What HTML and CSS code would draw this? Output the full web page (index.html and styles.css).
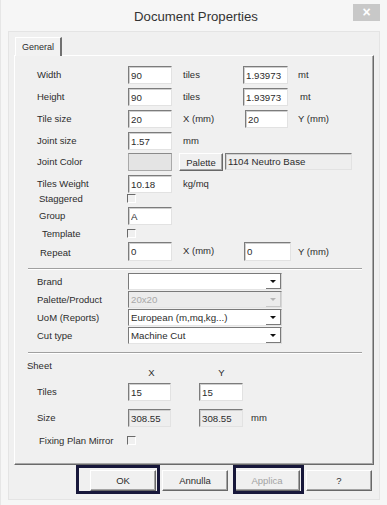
FILE: index.html
```html
<!DOCTYPE html>
<html lang="it">
<head>
  <meta charset="UTF-8">
  <title>Document Properties</title>
  <link rel="stylesheet" href="styles.css">
</head>
<body>
<div class="window">
  <div class="titlebar">
    <span></span>
    <span class="title">Document Properties</span>
    <span class="close">&times;</span>
  </div>

  <div class="client">
    <div class="tabs"><span class="tab">General</span></div>

    <div class="panel">
      <!-- dimensioni -->
      <div class="row h22"><span class="lbl">Width</span><input class="field" value="90"><span class="unit">tiles</span><input class="field f2" value="1.93973"><span class="unit2">mt</span></div>
      <div class="row h22"><span class="lbl">Height</span><input class="field" value="90"><span class="unit">tiles</span><input class="field f2" value="1.93973"><span class="unit2 u12">mt</span></div>
      <div class="row h22"><span class="lbl">Tile size</span><input class="field" value="20"><span class="unit">X (mm)</span><input class="field f2 tile2" value="20"><span class="unit2">Y (mm)</span></div>
      <div class="row h21"><span class="lbl">Joint size</span><input class="field" value="1.57"><span class="unit">mm</span></div>
      <div class="row h22"><span class="lbl">Joint Color</span><span class="swatch"></span><button class="btn palette">Palette</button><input class="field ro name" value="1104 Neutro Base"></div>
      <div class="row h18"><span class="lbl">Tiles Weight</span><input class="field" value="10.18"><span class="unit">kg/mq</span></div>
      <div class="row h14"><span class="lbl small ind2">Staggered</span><span class="check"></span></div>
      <div class="row h21"><span class="lbl ind2">Group</span><input class="field" value="A"></div>
      <div class="row h14"><span class="lbl small ind5">Template</span><span class="check"></span></div>
      <div class="row h19"><span class="lbl ind3 low">Repeat</span><input class="field tall" value="0"><span class="unit">X (mm)</span><input class="field f2 tall rep2" value="0"><span class="unit2 u7">Y (mm)</span></div>

      <div class="sep"></div>

      <!-- prodotto -->
      <div class="row h18"><span class="lbl">Brand</span><div class="combo"><span class="combo-text"></span><span class="arrow"></span></div></div>
      <div class="row h18"><span class="lbl">Palette/Product</span><div class="combo off"><span class="combo-text">20x20</span><span class="arrow"></span></div></div>
      <div class="row h18"><span class="lbl">UoM (Reports)</span><div class="combo"><span class="combo-text">European (m,mq,kg...)</span><span class="arrow"></span></div></div>
      <div class="row h18"><span class="lbl">Cut type</span><div class="combo"><span class="combo-text">Machine Cut</span><span class="arrow"></span></div></div>

      <div class="sep"></div>

      <!-- foglio -->
      <div class="row sheet-head">
        <span class="sheet-title">Sheet</span>
        <span class="axis">X</span>
        <span class="axis axis-y">Y</span>
      </div>
      <div class="row h26"><span class="lbl">Tiles</span><input class="field s1" value="15"><input class="field s2" value="15"></div>
      <div class="row h25"><span class="lbl">Size</span><input class="field s1 ro" value="308.55"><input class="field s2 ro" value="308.55"><span class="unit-mm">mm</span></div>
      <div class="row"><span class="lbl small14 ind2">Fixing Plan Mirror</span><span class="check low2"></span></div>
    </div>

    <div class="buttons">
      <button class="btn dlg marked mark-ok">OK</button>
      <button class="btn dlg">Annulla</button>
      <button class="btn dlg disabled marked mark-apply">Applica</button>
      <button class="btn dlg">?</button>
    </div>
  </div>
</div>
</body>
</html>
```

FILE: styles.css
```css
* { box-sizing: border-box; }
body {
  margin: 0;
  font-family: 'Liberation Sans', Arial, sans-serif;
  font-size: 9.5px;
  color: #2c2c2c;
  background: #f5f5f5;
}
.window {
  width: 387px;
  height: 505px;
  background: #f6f6f6;
  border-left: 1px solid #e6e6e6;
  padding: 0 7px 0 7px;
}
.titlebar {
  display: grid;
  grid-template-columns: 1fr auto 1fr;
  height: 31px;
  padding-left: 4px;
}
.title {
  font-size: 13.2px;
  color: #333;
  line-height: 34px;
}
.close {
  justify-self: end;
  margin-top: 4px;
  width: 27px;
  height: 17px;
  background: #c8c8c8;
  color: #fff;
  font-size: 14px;
  font-weight: bold;
  text-align: center;
  line-height: 17px;
}
.client {
  height: 469px;
  background: #f0f0f0;
  border: 1px solid #e4e4e4;
  padding: 5px 5px 0 5px;
}
.tabs {
  height: 18px;
  display: flex;
  padding-left: 1px;
}
.tab {
  width: 47px;
  height: 19px;
  padding: 4px 0 0 6px;
  font-size: 9px;
  background: #f2f2f2;
  border-top: 1px solid #fff;
  border-left: 1px solid #fff;
  border-right: 2px solid #707070;
  position: relative;
  z-index: 1;
}
.panel {
  height: 410px;
  border-top: 1px solid #fff;
  border-left: 1px solid #fff;
  border-right: 1px solid #6a6a6a;
  border-bottom: 1px solid #6a6a6a;
  box-shadow: inset -1px -1px 0 #a8a8a8;
  padding: 10px 0 0 22px;
}

.row {
  display: flex;
  align-items: flex-start;
}
.h14 { height: 14px; }
.h18 { height: 18px; }
.h19 { height: 19px; }
.h21 { height: 21px; }
.h22 { height: 22px; }
.h25 { height: 25px; }
.h26 { height: 26px; }

.lbl {
  width: 91px;
  flex-shrink: 0;
  line-height: 18px;
  white-space: nowrap;
}
.lbl.small { line-height: 12px; }
.lbl.small14 { line-height: 14px; }
.lbl.low { line-height: 21px; }
.ind2 { padding-left: 2px; }
.ind3 { padding-left: 3px; }
.ind5 { padding-left: 5px; }

.field {
  width: 44px;
  height: 18px;
  margin: 0;
  padding: 0 0 0 2px;
  font-family: inherit;
  font-size: 9.7px;
  color: #2c2c2c;
  background: #fff;
  border: 1px solid;
  border-color: #7c7c7c #e2e2e2 #e2e2e2 #7c7c7c;
  box-shadow: inset 1px 1px 0 #cfcfcf;
  outline: none;
}
.field.tall { height: 19px; }
.field.ro { background: #eeeeee; }
.f2 { width: 45px; }
.tile2 { margin-left: 2px; width: 43px; }
.rep2 { margin-left: 1px; width: 47px; }
.unit {
  width: 60px;
  margin-left: 11px;
  line-height: 18px;
}
.unit2 {
  margin-left: 10px;
  line-height: 18px;
}
.u12 { margin-left: 12px; }
.u7 { margin-left: 7px; line-height: 20px; }

.swatch {
  width: 44px;
  height: 18px;
  background: #e4e4e4;
  border: 1px solid #a9a9a9;
  border-top-color: #8a8a8a;
}
.btn {
  font-family: inherit;
  font-size: 9.5px;
  color: #2c2c2c;
  background: #f0f0f0;
  border: 1px solid;
  border-color: #fff #686868 #686868 #fff;
  box-shadow: inset -1px -1px 0 #a4a4a4;
  padding: 0;
}
.palette {
  width: 44px;
  height: 18px;
  margin-left: 7px;
}
.name {
  width: 127px;
  height: 17px;
  margin-left: 2px;
  background: #ececec;
}

.check {
  width: 9px;
  height: 9px;
  margin-top: 1px;
  margin-left: -1px;
  border-top: 1px solid #6a6a6a;
  border-left: 1px solid #6a6a6a;
  border-right: 1px solid #fff;
  border-bottom: 1px solid #fff;
}
.check.low2 { margin-top: 2px; }

.sep {
  margin: 7px 0 3px -9px;
  width: 334px;
  border-top: 1px solid #a0a0a0;
  border-bottom: 1px solid #fff;
}

.combo {
  display: flex;
  width: 154px;
  height: 17px;
  background: #fff;
  border: 1px solid;
  border-color: #7a7a7a #d6d6d6 #e4e4e4 #7a7a7a;
}
.combo-text {
  flex: 1;
  padding-left: 2px;
  line-height: 15px;
  font-size: 9.7px;
}
.arrow {
  width: 15px;
  border-right: 1px solid #7a7a7a;
  border-bottom: 1px solid #7a7a7a;
  display: flex;
  justify-content: center;
  align-items: center;
}
.arrow::before {
  content: "";
  border-left: 3px solid transparent;
  border-right: 3px solid transparent;
  border-top: 3px solid #111;
}
.combo.off { background: #ececec; }
.combo.off .combo-text { color: #a8a8a8; }
.combo.off .arrow { border-color: #c8c8c8; }
.combo.off .arrow::before { border-top-color: #b5b5b5; }

.sheet-head { height: 24px; margin-top: 5px; }
.sheet-title {
  width: 101px;
  margin-left: -10px;
  line-height: 14px;
}
.axis {
  width: 47px;
  margin-top: 7px;
  text-align: center;
  line-height: 14px;
}
.axis-y { margin-left: 23px; }
.s1 { width: 43px; }
.s2 { margin-left: 28px; width: 44px; }
.unit-mm {
  margin-left: 8px;
  line-height: 18px;
}

.buttons {
  display: flex;
  justify-content: flex-end;
  gap: 6px;
  margin-top: 5px;
  padding-right: 2px;
}
.btn.dlg {
  width: 66px;
  height: 21px;
  position: relative;
}
.btn.disabled { color: #a3a3a3; }
.marked::after {
  content: "";
  position: absolute;
  top: -6px;
  bottom: -4px;
  border: 3px solid #17173a;
}
.mark-ok::after { left: -15px; right: -5px; }
.mark-apply::after { left: -2px; right: -5px; }
```
